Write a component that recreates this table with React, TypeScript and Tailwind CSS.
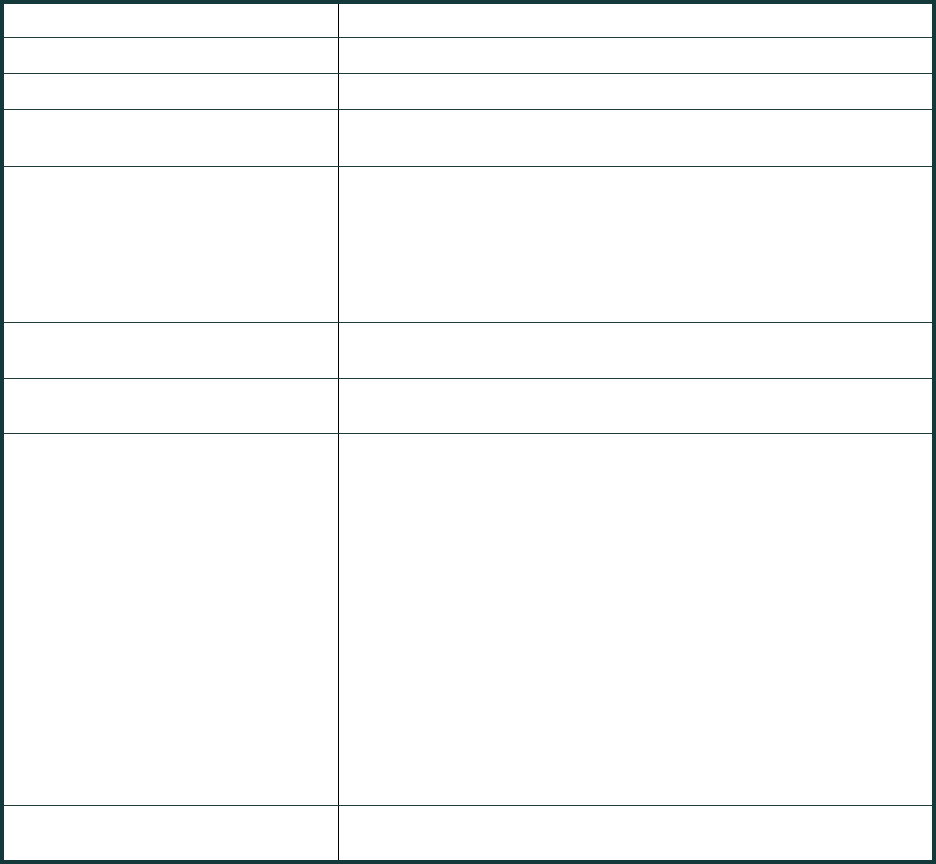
import React from 'react';

// row heights include the 1px bottom rule
const rows = [
  'h-[34px]',
  'h-[36px]',
  'h-[36px]',
  'h-[57px]',
  'h-[156px]',
  'h-[56px]',
  'h-[55px]',
  'h-[372px]',
  'h-[54px]',
];

export default function App() {
  return (
    <div className="w-[936px] h-[864px] bg-white border-4 border-[#13393a] flex flex-col font-['Liberation_Sans',sans-serif]">
      {rows.map((h, i) => (
        <div
          key={i}
          className={`${h} flex shrink-0 ${i < rows.length - 1 ? 'border-b border-[#1d3b39]' : ''}`}
        >
          <div className="w-[335px] shrink-0 border-r border-black" />
          <div className="flex-1" />
        </div>
      ))}
    </div>
  );
}
